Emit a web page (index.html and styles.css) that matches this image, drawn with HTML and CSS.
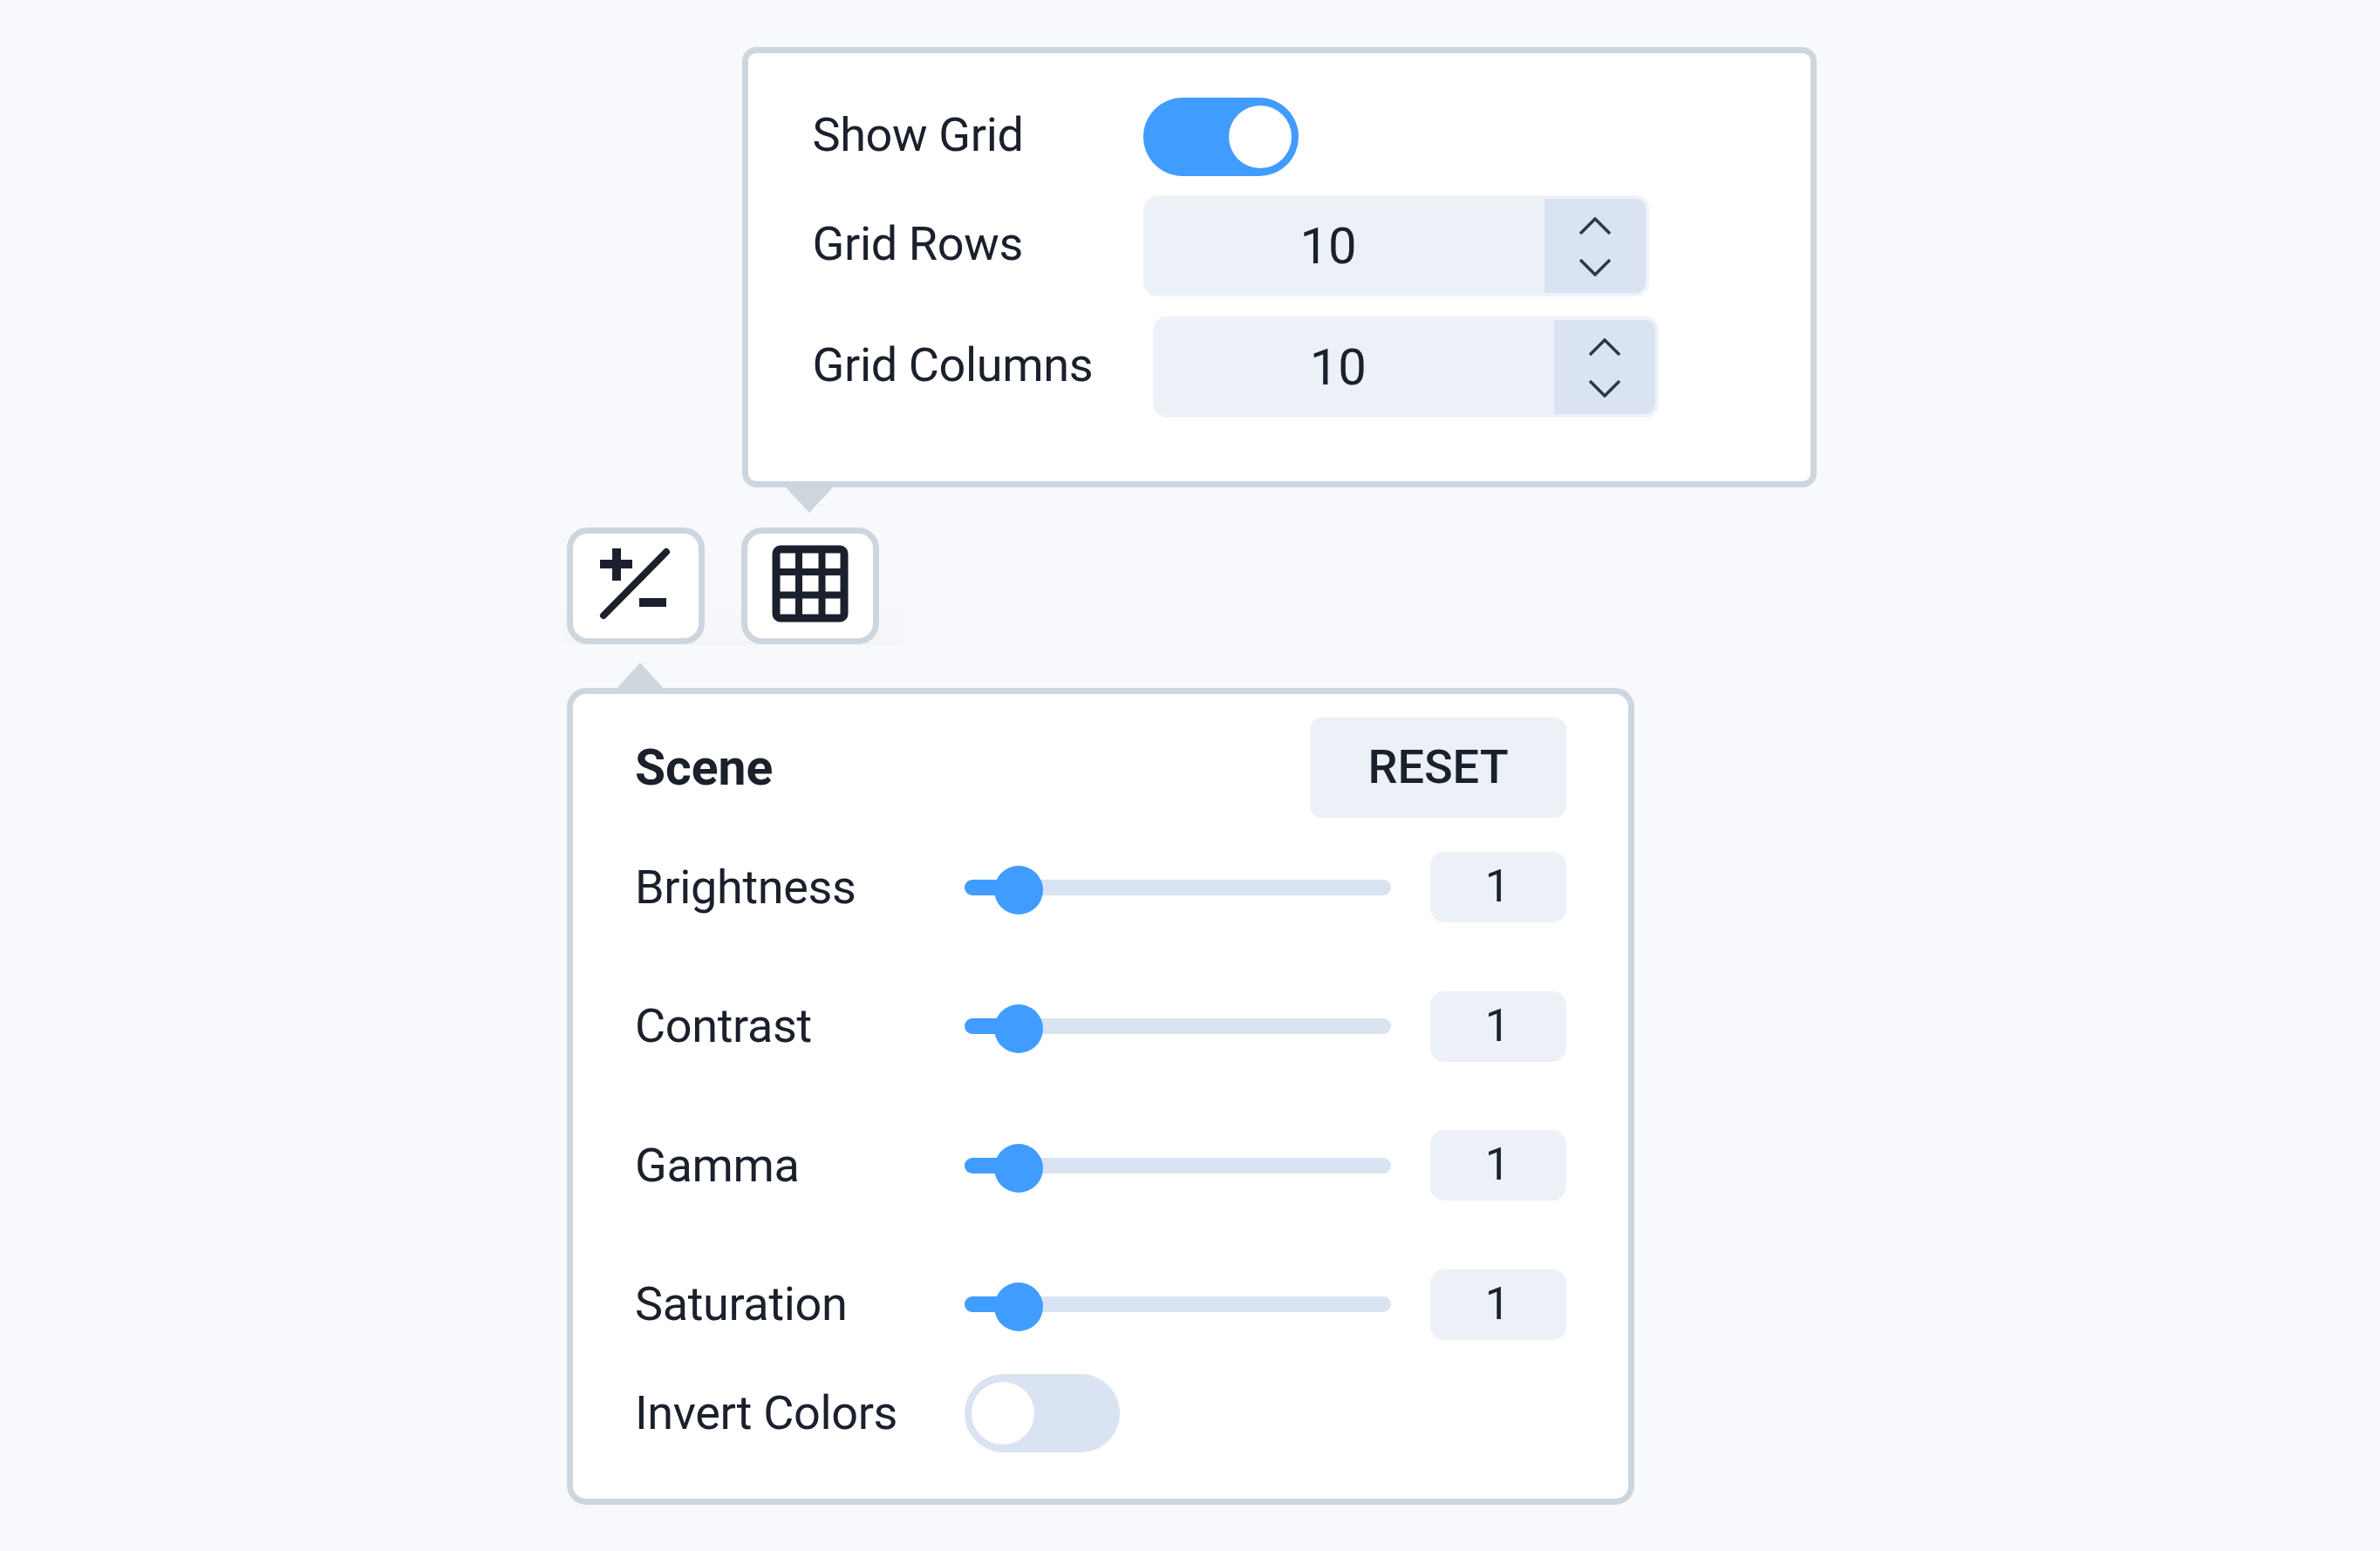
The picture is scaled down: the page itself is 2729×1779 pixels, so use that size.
FILE: index.html
```html
<!DOCTYPE html>
<html lang="en">
<head>
  <meta charset="UTF-8" />
  <meta name="viewport" content="width=device-width, initial-scale=1.0" />
  <title>Scene Settings</title>
  <link rel="stylesheet" href="styles.css">
</head>
<body>
  <div class="stage">
    <div class="popover grid-panel">
      <div class="grid-row">
        <label class="grid-label">Show Grid</label>
        <div class="toggle on"><span class="knob"></span></div>
      </div>
      <div class="grid-row row-input">
        <label class="grid-label">Grid Rows</label>
        <div class="number-input">
          <span class="number-value">10</span>
          <div class="stepper">
            <svg width="36" height="20" viewBox="0 0 36 20"><polyline points="1,19 18,2 35,19"/></svg>
            <svg width="36" height="20" viewBox="0 0 36 20"><polyline points="1,1 18,18 35,1"/></svg>
          </div>
        </div>
      </div>
      <div class="grid-row row-input">
        <label class="grid-label">Grid Columns</label>
        <div class="number-input">
          <span class="number-value">10</span>
          <div class="stepper">
            <svg width="36" height="20" viewBox="0 0 36 20"><polyline points="1,19 18,2 35,19"/></svg>
            <svg width="36" height="20" viewBox="0 0 36 20"><polyline points="1,1 18,18 35,1"/></svg>
          </div>
        </div>
      </div>
    </div>

    <div class="toolbar">
      <button class="tool-btn">
        <svg width="144" height="120" viewBox="0 0 144 120">
          <path class="icon-line" d="M31 35H68M50 17V54M76 79H107" stroke-width="10"/>
          <path class="icon-line" d="M35 94L107 21" stroke-width="8" stroke-linecap="round"/>
        </svg>
      </button>
      <button class="tool-btn">
        <svg width="144" height="120" viewBox="0 0 144 120">
          <rect class="icon-line" x="33" y="18" width="78" height="79" rx="5" stroke-width="9"/>
          <path class="icon-line" d="M59 18V97M85.5 18V97M33 44H111M33 70.5H111" stroke-width="8"/>
        </svg>
      </button>
    </div>

    <div class="popover scene-panel">
      <div class="scene-header">
        <span class="scene-title">Scene</span>
        <button class="reset-btn">RESET</button>
      </div>
      <div class="slider-row">
        <label class="scene-label">Brightness</label>
        <div class="slider"><span class="slider-fill"></span><span class="slider-thumb"></span></div>
        <span class="slider-value">1</span>
      </div>
      <div class="slider-row">
        <label class="scene-label">Contrast</label>
        <div class="slider"><span class="slider-fill"></span><span class="slider-thumb"></span></div>
        <span class="slider-value">1</span>
      </div>
      <div class="slider-row">
        <label class="scene-label">Gamma</label>
        <div class="slider"><span class="slider-fill"></span><span class="slider-thumb"></span></div>
        <span class="slider-value">1</span>
      </div>
      <div class="slider-row">
        <label class="scene-label">Saturation</label>
        <div class="slider"><span class="slider-fill"></span><span class="slider-thumb"></span></div>
        <span class="slider-value">1</span>
      </div>
      <div class="invert-row">
        <label class="scene-label">Invert Colors</label>
        <div class="toggle"><span class="knob"></span></div>
      </div>
    </div>
  </div>
</body>
</html>
```

FILE: styles.css
```css
* {
  box-sizing: border-box;
}
body {
  margin: 0;
  height: 1779px;
  overflow: hidden;
  font-family: Roboto, 'Liberation Sans', sans-serif;
  font-size: 54px;
  letter-spacing: -0.35px;
  color: #1a202c;
  background: #f7f9fd;
}
.stage {
  display: flex;
  flex-direction: column;
  align-items: flex-start;
  padding: 54px 0 0 650px;
}
.popover {
  position: relative;
  background: white;
  border: 7px solid #cdd5de;
  border-radius: 16px;
}
.popover::after {
  content: '';
  position: absolute;
  border-left: 27px solid transparent;
  border-right: 27px solid transparent;
}

/* grid settings */
.grid-panel {
  width: 1232px;
  height: 505px;
  margin-left: 201px;
  padding: 51px 0 0 73.5px;
}
.grid-panel::after {
  top: 498px;
  left: 43px;
  border-top: 29px solid #cdd5de;
}
.grid-row {
  display: flex;
  align-items: center;
  height: 90px;
  margin-bottom: 22px;
}
.row-input {
  height: 116px;
  margin-bottom: 23px;
}
.grid-label {
  min-width: 310.5px;
  margin-right: 69px;
  padding-bottom: 5px;
  white-space: nowrap;
}
.toggle {
  display: flex;
  align-items: center;
  width: 178px;
  height: 90px;
  padding: 0 8px;
  background: #dae3f1;
  border-radius: 45px;
}
.toggle.on {
  justify-content: flex-end;
  background: #409cff;
}
.knob {
  width: 72px;
  height: 72px;
  background: white;
  border-radius: 50%;
}
.number-input {
  display: flex;
  width: 580px;
  height: 116px;
  background: #ecf1f8;
  border: 4px solid #eef2f9;
  border-radius: 16px;
}
.number-value {
  flex: 1;
  padding-right: 40px;
  font-size: 58px;
  letter-spacing: 0;
  line-height: 108px;
  text-align: center;
}
.stepper {
  display: flex;
  flex-direction: column;
  align-items: center;
  gap: 28px;
  width: 116px;
  padding-top: 21px;
  background: #dae3f1;
  border-radius: 0 12px 12px 0;
}
.stepper svg {
  fill: none;
  stroke: #2d3748;
  stroke-width: 3.5;
}

/* toolbar */
.toolbar {
  display: flex;
  gap: 42px;
  margin: 46px 0 0 -5px;
  padding: 0 29px 1px 5px;
  background: linear-gradient(transparent 65%, #f3f5f9);
  border-radius: 0 0 8px 8px;
}
.tool-btn {
  width: 158px;
  height: 134px;
  padding: 0;
  background: white;
  border: 7px solid #cdd5de;
  border-radius: 24px;
}
.tool-btn svg {
  display: block;
  filter: blur(0.6px);
}
.icon-line {
  fill: none;
  stroke: #1a202c;
}

/* scene settings */
.scene-panel {
  width: 1224px;
  height: 937px;
  margin-top: 49px;
  padding: 27px 71px 0 71px;
  border-radius: 22px;
}
.scene-panel::after {
  top: -36px;
  left: 51px;
  border-bottom: 29px solid #cdd5de;
  border-left-width: 26px;
  border-right-width: 26px;
}
.scene-header {
  display: flex;
  justify-content: space-between;
  align-items: center;
}
.scene-title {
  font-weight: 700;
  font-size: 57px;
  letter-spacing: 0;
}
.reset-btn {
  width: 294px;
  height: 115px;
  padding: 0 0 3px;
  font-family: inherit;
  font-size: 54px;
  font-weight: 500;
  color: #1a202c;
  background: #ecf1f8;
  border: none;
  border-radius: 14px;
}
.slider-row {
  display: flex;
  align-items: center;
  height: 159.5px;
}
.scene-label {
  width: 378px;
  flex: none;
  padding-bottom: 1px;
  white-space: nowrap;
}
.slider {
  position: relative;
  width: 489px;
  height: 18px;
  margin-right: 45px;
  background: #dae3f1;
  border-radius: 9px;
}
.slider-fill {
  display: block;
  width: 62px;
  height: 18px;
  background: #409cff;
  border-radius: 9px 0 0 9px;
}
.slider-thumb {
  position: absolute;
  top: -16px;
  left: 34px;
  width: 56px;
  height: 56px;
  background: #409cff;
  border-radius: 50%;
}
.slider-value {
  width: 156px;
  height: 81px;
  padding-right: 2px;
  font-size: 51px;
  line-height: 80px;
  text-align: center;
  background: #ecf1f8;
  border-radius: 16px;
}
.invert-row {
  display: flex;
  align-items: center;
  height: 89px;
}
```
